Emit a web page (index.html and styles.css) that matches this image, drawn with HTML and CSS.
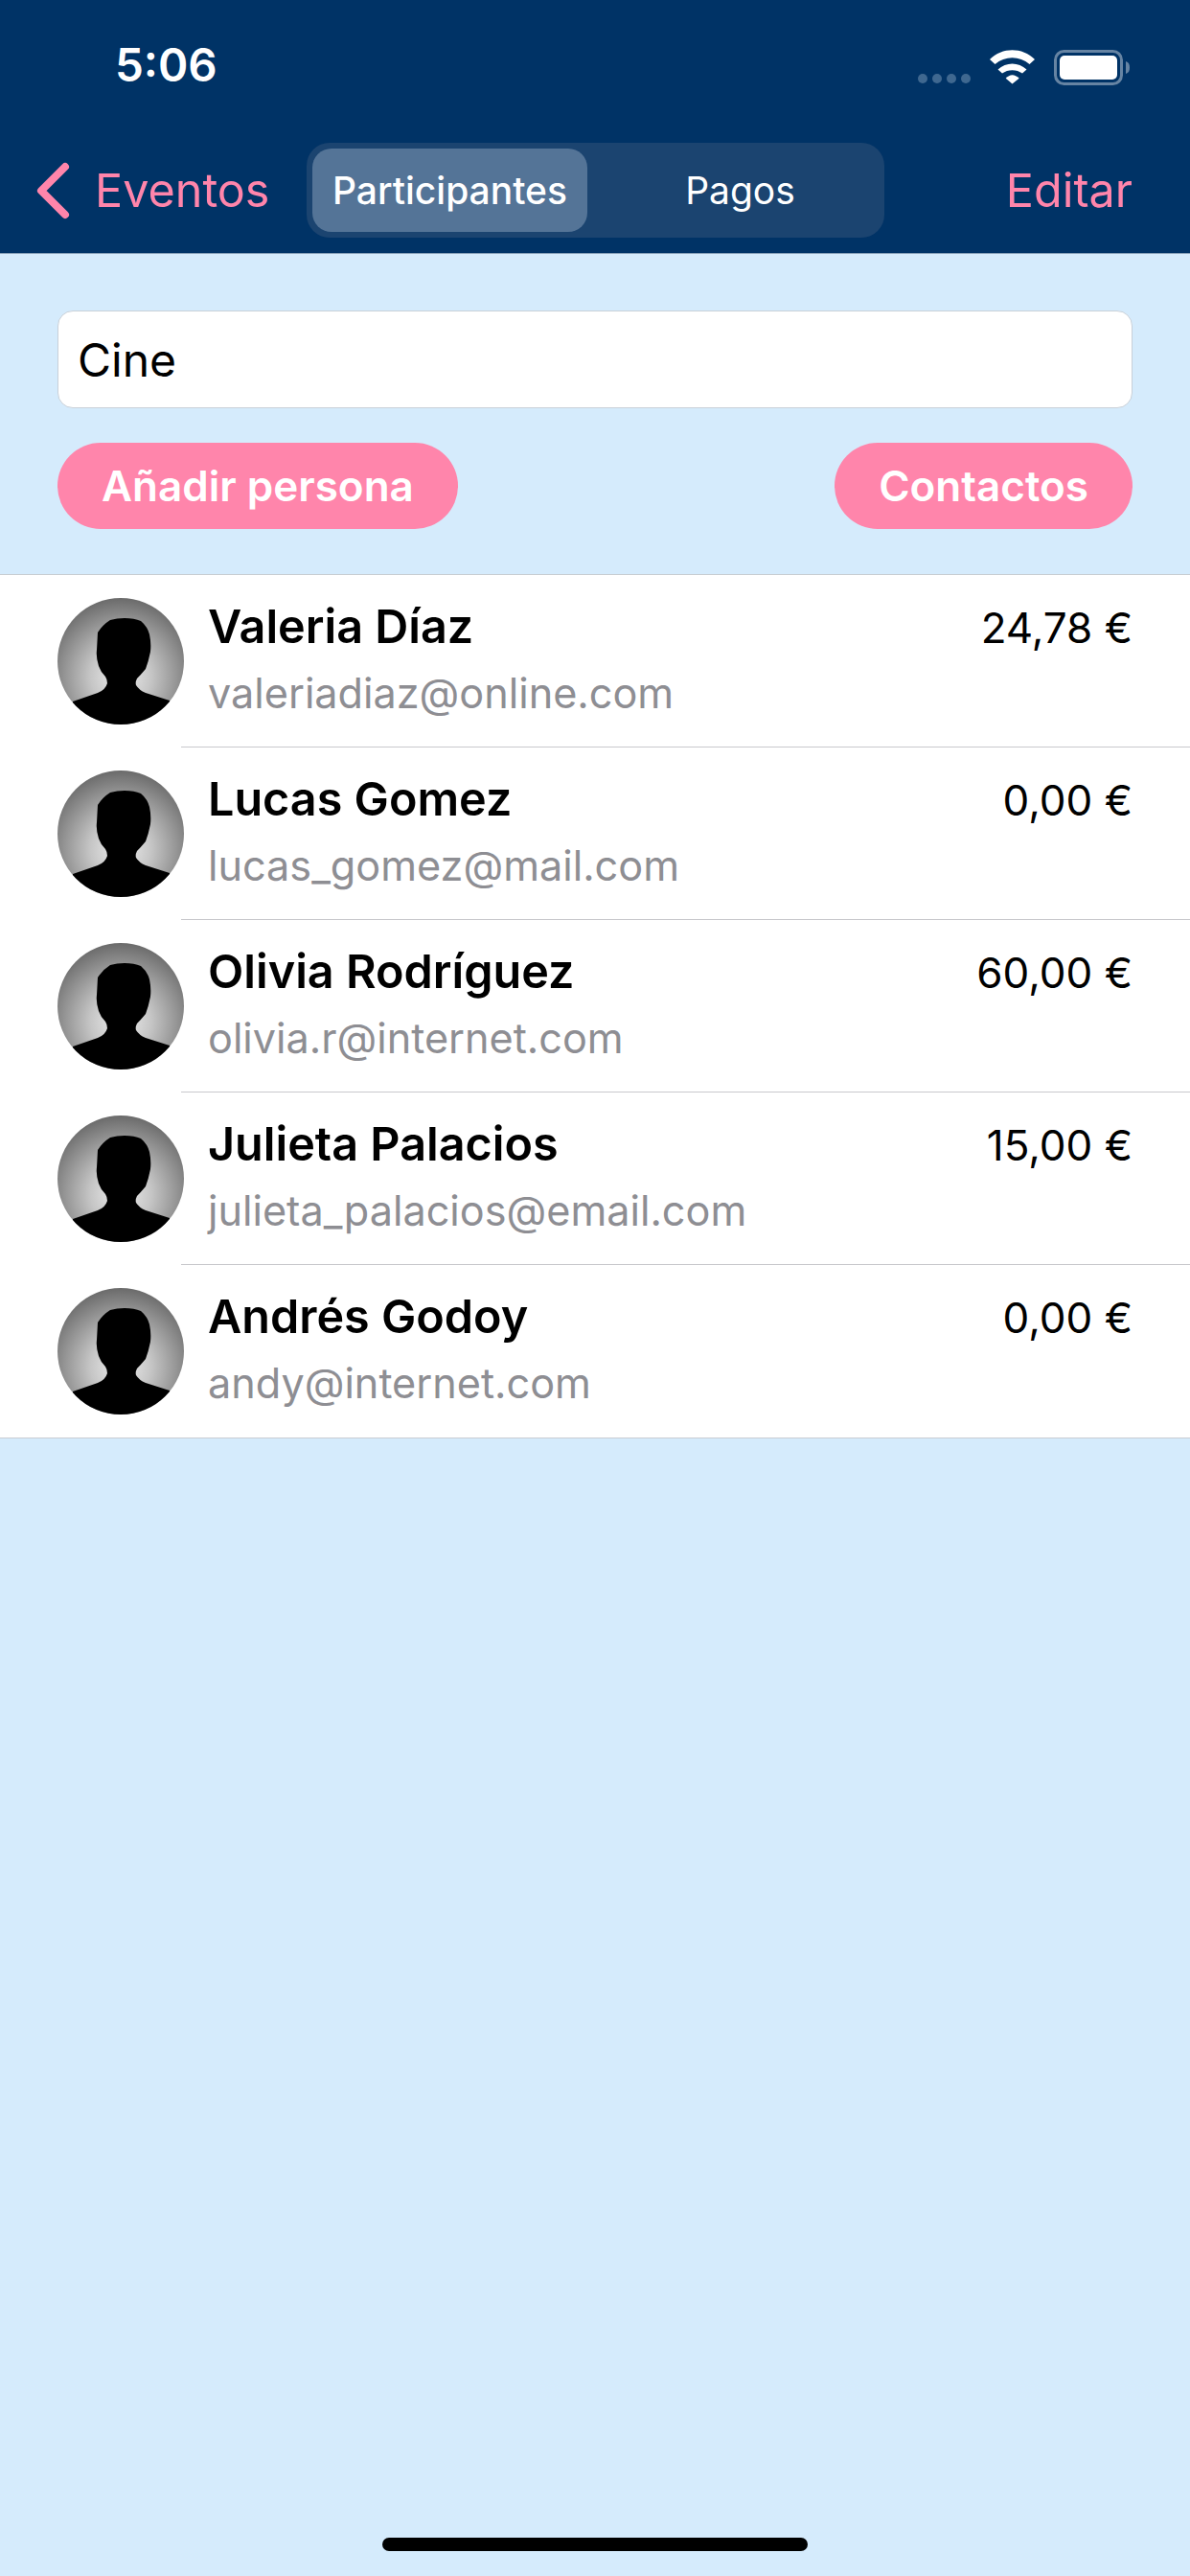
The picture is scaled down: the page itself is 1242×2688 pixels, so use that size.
FILE: index.html
```html
<!DOCTYPE html>
<html lang="es">
<head>
  <meta charset="UTF-8" />
  <meta name="viewport" content="width=device-width, initial-scale=1.0"/>
  <title>Cine</title>
  <link rel="stylesheet" href="styles.css">
</head>
<body>

<svg class="defs" width="0" height="0" aria-hidden="true">
  <defs>
    <radialGradient id="halo" cx="50%" cy="62%" r="68%">
      <stop offset="0" stop-color="#eeeeee"/>
      <stop offset="0.35" stop-color="#c6c6c6"/>
      <stop offset="1" stop-color="#5c5c5c"/>
    </radialGradient>
    <clipPath id="round"><circle cx="66" cy="66" r="66"/></clipPath>
    <symbol id="avatar" viewBox="0 0 132 132">
      <circle cx="66" cy="66" r="66" fill="url(#halo)"/>
      <path clip-path="url(#round)" d="M16 108 L42 99 Q50 96 52 89 Q52 85 50 82 Q45 77 43 71 Q40 62 41 54 L42 36 Q47 28 55 23 Q62 21 70 21 Q80 21 87 24 Q94 30 96 38 Q98 47 97 56 Q95 66 92 74 Q87 80 83 84 Q81 88 82 91 Q85 96 92 99 L117 107 L117 140 L16 140 Z" fill="#000"/>
    </symbol>
  </defs>
</svg>

<!-- Top bar -->
<header class="top">
  <div class="status">
    <span class="time">5:06</span>
    <div class="status-icons">
      <svg class="dots" width="55" height="10" viewBox="0 0 55 10">
        <circle cx="5" cy="5" r="5"/><circle cx="20" cy="5" r="5"/><circle cx="35" cy="5" r="5"/><circle cx="50" cy="5" r="5"/>
      </svg>
      <svg class="wifi" width="47" height="36" viewBox="0 0 47 36">
        <path d="M0 10 C13 -3 34 -3 47 10 L41.5 15 C31 6 16 6 5.5 15 Z"/>
        <path d="M8.5 20.5 C17 12.5 30 12.5 38.5 20.5 L34 24.5 C28 20 19 20 13 24.5 Z"/>
        <path d="M16.7 29.7 C21 25 26 25 30.7 29.7 L23.5 35.5 Z"/>
      </svg>
      <svg class="battery" width="80" height="37" viewBox="0 0 80 37">
        <rect x="1.5" y="1.5" width="69" height="34" rx="9" fill="none" stroke="#fff" stroke-opacity="0.4" stroke-width="3"/>
        <rect x="6" y="6" width="60" height="25" rx="5" fill="#fff"/>
        <path d="M75 12 C78 13 79 15 79 18.5 C79 22 78 24 75 25 Z" fill="#fff" fill-opacity="0.4"/>
      </svg>
    </div>
  </div>
  <nav class="navbar">
    <a class="back">
      <svg width="36" height="60" viewBox="0 0 36 60">
        <path d="M31 5 L6 30 L31 55" fill="none" stroke="#ff85ab" stroke-width="8" stroke-linecap="round" stroke-linejoin="round"/>
      </svg>
      <span>Eventos</span>
    </a>
    <div class="segment">
      <div class="seg-item selected">Participantes</div>
      <div class="seg-item">Pagos</div>
    </div>
    <a class="edit">Editar</a>
  </nav>
</header>

<!-- Event form -->
<section class="event">
  <div class="field">Cine</div>
  <div class="actions">
    <button class="pill">Añadir persona</button>
    <button class="pill">Contactos</button>
  </div>
</section>

<!-- People -->
<ul class="people">
  <li class="person">
    <svg class="avatar" viewBox="0 0 132 132"><use href="#avatar"/></svg>
    <div class="info">
      <div class="line"><span class="name">Valeria Díaz</span><span class="amount">24,78 €</span></div>
      <div class="mail">valeriadiaz@online.com</div>
    </div>
  </li>
  <li class="person">
    <svg class="avatar" viewBox="0 0 132 132"><use href="#avatar"/></svg>
    <div class="info">
      <div class="line"><span class="name">Lucas Gomez</span><span class="amount">0,00 €</span></div>
      <div class="mail">lucas_gomez@mail.com</div>
    </div>
  </li>
  <li class="person">
    <svg class="avatar" viewBox="0 0 132 132"><use href="#avatar"/></svg>
    <div class="info">
      <div class="line"><span class="name">Olivia Rodríguez</span><span class="amount">60,00 €</span></div>
      <div class="mail">olivia.r@internet.com</div>
    </div>
  </li>
  <li class="person">
    <svg class="avatar" viewBox="0 0 132 132"><use href="#avatar"/></svg>
    <div class="info">
      <div class="line"><span class="name">Julieta Palacios</span><span class="amount">15,00 €</span></div>
      <div class="mail">julieta_palacios@email.com</div>
    </div>
  </li>
  <li class="person">
    <svg class="avatar" viewBox="0 0 132 132"><use href="#avatar"/></svg>
    <div class="info">
      <div class="line"><span class="name">Andrés Godoy</span><span class="amount">0,00 €</span></div>
      <div class="mail">andy@internet.com</div>
    </div>
  </li>
</ul>

<div class="home-bar"></div>

</body>
</html>
```

FILE: styles.css
```css
* {
  box-sizing: border-box;
}

body {
  margin: 0;
  min-height: 100vh;
  display: flex;
  flex-direction: column;
  background-color: #d5ebfc;
  font-family: Inter, "Liberation Sans", sans-serif;
  color: #000;
}

.defs {
  position: absolute;
}

.top {
  height: 265px;
  background-color: #003366;
  border-bottom: 1px solid #8ba3bb;
}

.status {
  height: 149px;
  display: flex;
  justify-content: space-between;
  padding: 46px 62px 0 120px;
}

.time {
  font-size: 47.5px;
  font-weight: 600;
  line-height: 44px;
  color: #fff;
}

.status-icons {
  display: flex;
  align-items: flex-end;
  height: 40px;
  margin-top: 3px;
}

.dots {
  fill: #3f6890;
  margin-bottom: 2px;
}

.wifi {
  fill: #fff;
  margin-left: 20px;
  margin-bottom: 1px;
}

.battery {
  margin-left: 20px;
}

.navbar {
  height: 99px;
  display: flex;
  align-items: center;
  padding: 0 60px 0 37px;
}

.back {
  flex: 0 0 246px;
  display: flex;
  align-items: center;
  gap: 26px;
  font-size: 48.5px;
  color: #ff85ab;
}

.edit {
  margin-left: auto;
  font-size: 48.5px;
  color: #ff85ab;
}

.segment {
  margin-left: 37px;
  width: 603px;
  height: 99px;
  padding: 6px;
  display: flex;
  background-color: #1b4470;
  border-radius: 24px;
}

.seg-item {
  flex: 1;
  display: flex;
  align-items: center;
  justify-content: center;
  padding-left: 15px;
  font-size: 39px;
  color: #fff;
  border-radius: 20px;
}

.seg-item.selected {
  flex: 0 0 287px;
  padding-left: 0;
  background-color: #547497;
  font-weight: 500;
}

.event {
  padding: 59px 60px 47px;
}

.field {
  height: 102px;
  padding-left: 20px;
  display: flex;
  align-items: center;
  background-color: #fff;
  border: 1px solid #c8d0d8;
  border-radius: 16px;
  font-size: 48px;
}

.actions {
  display: flex;
  justify-content: space-between;
  margin-top: 36px;
}

.pill {
  height: 90px;
  padding: 0 46px;
  border: none;
  border-radius: 45px;
  background-color: #ff85ab;
  color: #fff;
  font-family: inherit;
  font-size: 44px;
  font-weight: 600;
}

.people {
  list-style: none;
  margin: 0;
  padding: 0;
  background-color: #fff;
  border-top: 1px solid #c8cdd2;
  border-bottom: 1px solid #c8cdd2;
}

.person {
  height: 180px;
  display: flex;
  align-items: center;
  padding-left: 60px;
}

.avatar {
  flex: none;
  width: 132px;
  height: 132px;
}

.info {
  flex: 1;
  height: 100%;
  margin-left: -3px;
  padding: 23px 60px 0 28px;
  border-bottom: 1px solid #c8c8cc;
}

.person:last-child .info {
  border-bottom: none;
}

.line {
  display: flex;
  justify-content: space-between;
  align-items: baseline;
  line-height: 62px;
}

.name {
  font-size: 48.5px;
  font-weight: 600;
}

.amount {
  font-size: 44px;
}

.mail {
  margin-top: 10px;
  font-size: 43.2px;
  line-height: 54px;
  color: #8e8e93;
}

.home-bar {
  width: 444px;
  height: 14px;
  margin: auto auto 26px;
  background-color: #000;
  border-radius: 7px;
}
```
